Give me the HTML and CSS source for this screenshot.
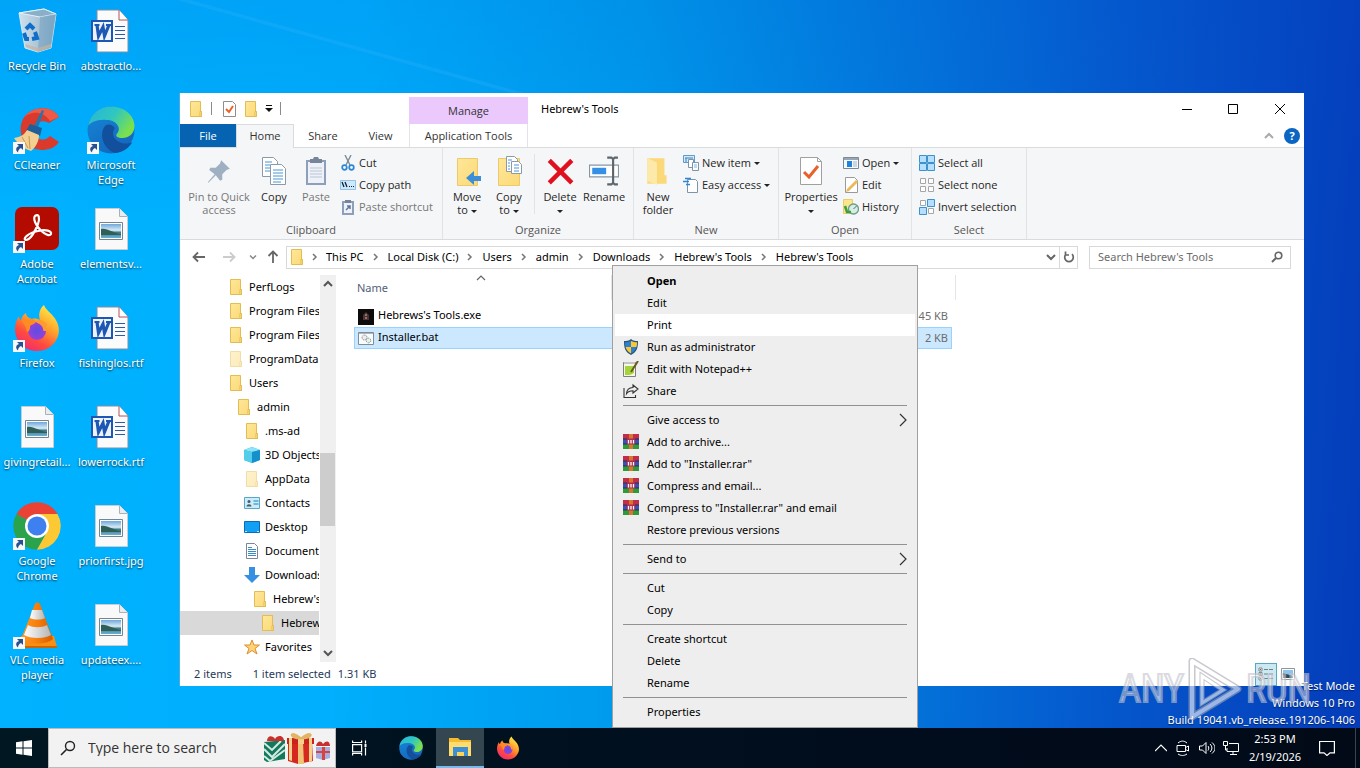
FILE: index.html
```html
<!DOCTYPE html>
<html lang="en">
<head>
<meta charset="utf-8">
<title>Desktop</title>
<link rel="stylesheet" href="styles.css">
</head>
<body>
<svg class="defs" aria-hidden="true">
  <defs>
    <linearGradient id="gFold" x1="0" y1="0" x2="1" y2="1"><stop offset="0" stop-color="#ffe79a"/><stop offset="1" stop-color="#fbd976"/></linearGradient>
    <linearGradient id="gEdgeTop" x1="0" y1="0" x2="1" y2=".5"><stop offset="0" stop-color="#28b4dc"/><stop offset=".55" stop-color="#2fc7c0"/><stop offset="1" stop-color="#7be04c"/></linearGradient>
    <linearGradient id="gEdgeMid" x1="0" y1="0" x2=".6" y2="1"><stop offset="0" stop-color="#1488d8"/><stop offset="1" stop-color="#1567bd"/></linearGradient>
    <linearGradient id="gFx" x1=".8" y1="0" x2=".2" y2="1"><stop offset="0" stop-color="#fff04a"/><stop offset=".4" stop-color="#ffa02b"/><stop offset=".7" stop-color="#ff4b3e"/><stop offset="1" stop-color="#f0257c"/></linearGradient>
    <radialGradient id="gFxIn"><stop offset="0" stop-color="#5a4fe0"/><stop offset="1" stop-color="#9a3fd8"/></radialGradient>
    <linearGradient id="gBin" x1="0" x2="1"><stop offset="0" stop-color="#cfe1ef"/><stop offset=".55" stop-color="#a9c3d6"/><stop offset="1" stop-color="#6e9cbd"/></linearGradient>
    <linearGradient id="gSky" x1="0" y1="0" x2="0" y2="1"><stop offset="0" stop-color="#6fa8dc"/><stop offset=".45" stop-color="#d8ebf5"/><stop offset=".6" stop-color="#3b7a8c"/><stop offset="1" stop-color="#6db0d4"/></linearGradient>
    <linearGradient id="gCone" x1="0" x2="1"><stop offset="0" stop-color="#ff9a2a"/><stop offset=".5" stop-color="#f77f0c"/><stop offset="1" stop-color="#d65c00"/></linearGradient>
    <linearGradient id="gConeW" x1="0" x2="1"><stop offset="0" stop-color="#fff"/><stop offset="1" stop-color="#b5b5b5"/></linearGradient>
  </defs>

  <symbol id="folder" viewBox="0 0 16 16"><path d="M2.500 .5h10v10h1v5h-11z" fill="url(#gFold)" stroke="#e3bd52"/><path d="M12 10.500h1.500v5H12z" fill="#ffe79a" stroke="#e3bd52"/></symbol>
  <symbol id="arrowlink" viewBox="0 0 12 12"><path d="M0 0h12v12H0z" fill="#f7f8fa"/><path d="M4 2h6v6L8 6c-2 1-3 2.500-3 4.500C2 8 3 5 6 4z" fill="#27528f"/></symbol>

  <symbol id="bin" viewBox="0 0 48 48"><path d="M6 6l25-4 12 5-5 34-13 4-13-4z" fill="url(#gBin)" stroke="#d7e8f2" stroke-width="1"/><path d="M6 6l21 4 16-3-12-5z" fill="#8ab0c9" stroke="#e6f1f7" stroke-width="1"/><path d="M27 10l-2 35 13-4 5-34z" fill="#7fa8c4" opacity=".7"/><path d="M12 37l13 4 13-4v3l-13 5-12-5z" fill="#c9b39d" opacity=".7"/><g fill="none" stroke="#0f6fc8" stroke-width="4"><path d="M13 22l4-4 4 4M11 26l2 6h3M19 32l5-1-2-6"/></g></symbol>
  <symbol id="word" viewBox="0 0 48 48"><path d="M10 3h22l9 10v32H10z" fill="#fbfbfc" stroke="#7d8fa8"/><path d="M32 3v10h9" fill="#fff" stroke="#b2525a"/><path d="M28 19.500h10M28 23.500h10M28 27.500h10M28 31.500h10" stroke="#2a5cab" stroke-width="1"/><path d="M5 14h20v20H5z" fill="#eef3fb" stroke="#1d57b4" stroke-width="2"/><path d="M10 18l1.500 11 4.500-9 1.500 9L22 18" fill="none" stroke="#1d57b4" stroke-width="3.200"/><path d="M7.500 18h5M19 18h5" stroke="#1d57b4" stroke-width="2"/></symbol>
  <symbol id="image" viewBox="0 0 48 48"><path d="M8.500 3.500h24l8 8v33h-32z" fill="#f9f9f9" stroke="#c9cdd2"/><path d="M32.500 3.500v8h8" fill="#e9ebee" stroke="#a9b0b8"/><path d="M12.500 17.500h23v17h-23z" fill="#fff" stroke="#6e8796"/><path d="M14 19h20v14H14z" fill="url(#gSky)"/><path d="M14 24c7-1 11 4 20 5v1H14z" fill="#2f5f57"/></symbol>
  <symbol id="ccleaner" viewBox="0 0 48 48"><path d="M46 11C39-2 17 0 10 13c-7 15 2 30 18 31 8 0 14-2 18-8l-9-6c-5 6-14 4-16-3-2-8 6-15 15-10z" fill="#d93a2b"/><path d="M46 11C39-2 17 0 10 13c5-7 19-10 27 2z" fill="#ee5a45"/><path d="M29 4l2 1-7 19-4-2z" fill="#2874ad"/><path d="M17 18l12 4-2 8-14-5z" fill="#1e5f99"/><path d="M14 24l12 5c0 7-4 13-8 16C11 43 5 38 1 32c7-1 10-3 13-8z" fill="#f3cf94"/><path d="M9 31l6 11M16 30l1 13" stroke="#c9984e" fill="none"/></symbol>
  <symbol id="edge" viewBox="0 0 48 48"><circle cx="24" cy="24" r="23.500" fill="url(#gEdgeMid)"/><path d="M19 19c-8 8-3 24 9 28C38 46 43 40 45.500 36 38 40 27 36 26 28c0-3 1-5 2-6-3-4-7-4-9-3z" fill="#124f9c"/><path d="M1 20C3 8 13 .5 24 .5 38 .5 47.500 10 47.500 20c0 8-6 12-12 12-5 0-8-2-5-5 4-5-1-13-11-13C10 13 3 17 1 20z" fill="url(#gEdgeTop)"/></symbol>
  <symbol id="acrobat" viewBox="0 0 48 48"><rect x="2" y="2" width="44" height="43" rx="7" fill="#b30b00"/><path d="M22 11c4-3 5 2 3 8-3 8-8 16-12 16-4-1 2-7 12-9 8-2 14 0 13 3-2 4-12-3-16-12-1-3-1-5 0-6z" fill="none" stroke="#fff" stroke-width="2.200"/></symbol>
  <symbol id="firefox" viewBox="0 0 48 48"><path d="M31 1c2 5 5 6 9 11 6 7 7 14 5 20-3 9-11 15-21 15C11 47 2 37 2 25c0-6 2-10 4-13 0 3 1 4 2 4 1-4 3-6 5-7 0 3 2 5 6 6 3-1 6 0 8 1-2-6 0-12 4-15z" fill="url(#gFx)"/><circle cx="24" cy="27" r="9" fill="url(#gFxIn)"/><path d="M8 16c4-1 7 0 11-1 3 0 4 4 2 5-3 1-4 1-4 4 0 2-2 4-3 4-1-5-3-9-6-12z" fill="#ff8c22"/><path d="M33 22c-3-5-7-5-9-5 5 2 8 6 8 10" fill="none" stroke="#ff9b2e" stroke-width="3"/></symbol>
  <symbol id="chrome" viewBox="0 0 48 48"><path d="M24 24L3.500 12A23.700 23.700 0 0 1 44.500 12z" fill="#ea4335"/><path d="M24 24L3.500 12A23.700 23.700 0 0 0 24 47.700L34 30z" fill="#2ba24c"/><path d="M34 30L24 47.700A23.700 23.700 0 0 0 44.500 12H24z" fill="#fcc934"/><circle cx="24" cy="24" r="12" fill="#fff"/><circle cx="24" cy="24" r="9.500" fill="#3f80f0"/></symbol>
  <symbol id="vlc" viewBox="0 0 48 48"><path d="M8 35h33l3 11H7z" fill="#f78f14"/><path d="M7 45h37v2H7z" fill="#d16400"/><path d="M22 3c1-2 4-2 5 0l13 35c-6 6-26 6-32 0z" fill="url(#gCone)"/><path d="M19 9h10l3 8c-4 2-11 2-15 0z" fill="url(#gConeW)"/><path d="M15 24c5 3 14 3 19 0l4 10c-6 4-21 4-27 0z" fill="url(#gConeW)"/></symbol>

  <symbol id="pin" viewBox="0 0 24 24"><path d="M14 2l8 8-3 1-4 4 0 5-2 1-4-5-7 7 0-1 6-7-5-4 1-2 5 0 4-4z" fill="#9fb0c2"/></symbol>
  <symbol id="copy" viewBox="0 0 26 30"><g fill="#fff" stroke="#8d99a6"><path d="M1.500 1.500h11l4 4v15h-15z"/><path d="M9.500 8.500h11l4 4v16h-15z"/></g><path d="M4 6h7M4 9h5M4 12h5M4 15h5M12 14h10M12 17h10M12 20h10M12 23h10M12 26h8" stroke="#4a96d6" fill="none"/></symbol>
  <symbol id="paste" viewBox="0 0 24 30"><path d="M2 4h20v25H2z" fill="#8d9fb9"/><path d="M4 6h16v21H4z" fill="#eef2f8"/><path d="M6 3h3l1-2h4l1 2h3v4H6z" fill="#76859b"/><path d="M6 12h12M6 15h12M6 18h12M6 21h12" stroke="#b9c5d6"/></symbol>
  <symbol id="cut" viewBox="0 0 16 16"><path d="M5 0l5 10M11 0L6 10" stroke="#7b8b98" stroke-width="1.400" fill="none"/><circle cx="4.500" cy="12.500" r="2.300" fill="none" stroke="#2b88d8" stroke-width="1.700"/><circle cx="11.500" cy="12.500" r="2.300" fill="none" stroke="#2b88d8" stroke-width="1.700"/></symbol>
  <symbol id="path" viewBox="0 0 16 16"><path d="M.5 3.500h15v9H.5z" fill="#cfe8fb" stroke="#8fc3ea"/><path d="M2 5l2 5M5 5l2 5" stroke="#123" stroke-width="1.300"/><path d="M9 9h1v1H9zM11 9h1v1h-1zM13 9h1v1h-1z" fill="#123"/></symbol>
  <symbol id="pshort" viewBox="0 0 16 16"><path d="M2 2h12v14H2z" fill="#8d9fb9"/><path d="M4 4h8v10H4z" fill="#eef2f8"/><path d="M5 1h6v3H5z" fill="#76859b"/><path d="M6 11l4-4M7 7h3v3" stroke="#5f77a0" stroke-width="1.500" fill="none"/></symbol>
  <symbol id="move" viewBox="0 0 28 30"><path d="M4.500 2.500h20v27h-20z" fill="url(#gFold)" stroke="#ecca69"/><path d="M28 20v5h-7v4l-8-7 8-7v5z" fill="#3b8fd9"/></symbol>
  <symbol id="copyto" viewBox="0 0 28 30"><path d="M3.500 2.500h21v27h-21z" fill="url(#gFold)" stroke="#ecca69"/><g fill="#fff" stroke="#8d99a6"><path d="M11.500 .5h8l3 3v12h-11z"/><path d="M16.500 5.500h7l3 3v9h-10z"/></g><path d="M19 9h5M19 12h5M19 15h5M13 4h4M13 7h2M13 10h2M13 13h2" stroke="#4a96d6"/></symbol>
  <symbol id="delete" viewBox="0 0 28 28"><path d="M4 4l21 21M25 4L4 25" stroke="#e0101f" stroke-width="4.200"/></symbol>
  <symbol id="rename" viewBox="0 0 28 28"><path d="M.5 8.500h27v11H.5z" fill="#fff" stroke="#8796a3"/><path d="M3 11h13v6H3z" fill="#3390e6"/><path d="M17 1.500h4l1.500 1.500L24 1.500h3M22.500 3v22M17 26.500h4l1.500-1.500 1.500 1.500h3" stroke="#5d656d" stroke-width="2" fill="none"/></symbol>
  <symbol id="newfolder" viewBox="0 0 28 28"><path d="M4 2h16v16h2v8H4z" fill="#fbd978"/><path d="M4 2l9 4v21l-9-4z" fill="#fdeaab"/></symbol>
  <symbol id="newitem" viewBox="0 0 16 16"><path d="M.5 .5h11v7H.5z" fill="#d5eafa" stroke="#5b9bd0"/><path d="M2 3h8M3 3v4" stroke="#3b83bd"/><g fill="#fff" stroke="#7d93a6"><path d="M5.500 4.500h5v8h-5z"/><path d="M9.500 7.500h6v8h-6z"/></g><path d="M11 10h3M11 12h3" stroke="#72b5e6"/></symbol>
  <symbol id="easy" viewBox="0 0 16 16"><path d="M4.500 2.500h8l2 2v11h-10z" fill="#fff" stroke="#7d93a6"/><path d="M2 1.500h6M0 4.500h6M3 7.500h4" stroke="#2b88d8" stroke-width="1.500"/></symbol>
  <symbol id="props" viewBox="0 0 24 30"><path d="M1.500 1.500h17l4 4v23h-21z" fill="#fff" stroke="#a0a0a0"/><path d="M18.500 1.500v4h4" fill="none" stroke="#a0a0a0"/><path d="M5 16l5 5 9-11" fill="none" stroke="#e8612c" stroke-width="3"/></symbol>
  <symbol id="open" viewBox="0 0 16 16"><path d="M.5 2.500h15v11H.5z" fill="#f7fafc" stroke="#7c8994"/><path d="M1 3h14v2H1z" fill="#9aa7b2"/><path d="M4 6h5v6H4z" fill="#1f83dc"/><path d="M10 7h4M10 9h4M10 11h4" stroke="#9db5c8"/></symbol>
  <symbol id="edit" viewBox="0 0 16 16"><path d="M2.500 .5h9l3 3v12h-12z" fill="#fff" stroke="#9a9a9a"/><path d="M15 5l-9 9-3 1 1-3 9-9z" fill="#edb75c"/></symbol>
  <symbol id="history" viewBox="0 0 16 16"><path d="M.5 .5h9v14h-9z" fill="#fbe58f" stroke="#e7cf65"/><circle cx="10.500" cy="10" r="5" fill="#d5efe2" stroke="#6f9a8a" stroke-width="1.300"/><path d="M10.500 10l3-3" stroke="#4c6f8a" fill="none"/><path d="M2 7l2 6h4" stroke="#36a047" stroke-width="2.500" fill="none"/></symbol>
  <symbol id="selall" viewBox="0 0 16 16"><path d="M.5 .5h7v7h-7zM8.500 .5h7v7h-7zM.5 8.500h7v7h-7zM8.500 8.500h7v7h-7z" fill="#b5dffc" stroke="#3e92cc"/></symbol>
  <symbol id="selnone" viewBox="0 0 16 16"><path d="M1.500 1.500h5v5h-5zM9.500 1.500h5v5h-5zM1.500 9.500h5v5h-5zM9.500 9.500h5v5h-5z" fill="#fff" stroke="#a6a6a6"/></symbol>
  <symbol id="selinv" viewBox="0 0 16 16"><path d="M1.500 1.500h5v5h-5zM9.500 9.500h5v5h-5z" fill="#fff" stroke="#a6a6a6"/><path d="M8.500 .5h7v7h-7zM.5 8.500h7v7h-7z" fill="#b5dffc" stroke="#3e92cc"/></symbol>
  <symbol id="qprops" viewBox="0 0 16 16"><path d="M2.500 .5h9l3 3v12h-12z" fill="#fff" stroke="#8e8e8e"/><path d="M5 8l3 3 4-6" fill="none" stroke="#e8612c" stroke-width="2"/></symbol>

  <symbol id="objects" viewBox="0 0 16 16"><path d="M0 3l8-3 8 3v10l-8 3-8-3z" fill="#22b1dc"/><path d="M0 3l8-3 8 3-8 2z" fill="#8ee4f5"/><path d="M0 3l8 2v11l-8-3z" fill="#52cdea"/><path d="M8 5l8-2v10l-8 3z" fill="#1590cc"/></symbol>
  <symbol id="contacts" viewBox="0 0 16 16"><path d="M.5 2.500h15v11H.5z" fill="#c9edfb" stroke="#5aa7c8"/><circle cx="5" cy="6.500" r="1.500" fill="#4f5a63"/><path d="M2.500 11.500c0-3 5-3 5 0z" fill="#4f5a63"/><path d="M9.500 6h5M9.500 9h5" stroke="#1e7fb8"/></symbol>
  <symbol id="desk" viewBox="0 0 16 16"><path d="M.5 2.500h15v11H.5z" fill="#12a0f5" stroke="#0b6cb5"/><path d="M1 12.500h2M13 12.500h2" stroke="#bfe5ff"/></symbol>
  <symbol id="docs" viewBox="0 0 16 16"><path d="M2.500 .5h8l3 3v12h-11z" fill="#fff" stroke="#798894"/><path d="M4 4h4v1H4zM4 6h8v1H4zM4 8h8v1H4zM4 10h8v1H4zM4 12h8v1H4z" fill="#3b8bc6"/></symbol>
  <symbol id="down" viewBox="0 0 16 16"><path d="M5 0h6v8h5l-8 8-8-8h5z" fill="#358fe2"/></symbol>
  <symbol id="star" viewBox="0 0 16 16"><path d="M8 1l2 5h5.500l-4.500 3.500L13 15l-5-3.500L3 15l2-5.500L.5 6H6z" fill="#ffd277" stroke="#d9902e"/></symbol>
  <symbol id="exe" viewBox="0 0 16 16"><path d="M0 0h16v16H0z" fill="#0d0b0c"/><path d="M5 11V6l3-3 3 3v5z" fill="#4a3432"/><path d="M7 5h2v2H7zM7 8h2v2H7z" fill="#9c6b68"/></symbol>
  <symbol id="bat" viewBox="0 0 16 16"><path d="M.5 1.500h15v12H.5z" fill="#fafcfd" stroke="#7e8d99"/><path d="M1 2.500h14" stroke="#aab6bf"/><circle cx="6.500" cy="6.500" r="2.500" fill="#eee" stroke="#8f8f8f" stroke-dasharray="1.500 .7"/><circle cx="10.500" cy="9.500" r="2.300" fill="#e4f1ee" stroke="#7f9a9a" stroke-dasharray="1.500 .7"/></symbol>

  <symbol id="shield" viewBox="0 0 16 16"><path d="M8 0c2 2 5 2 7 2 0 7-1 11-7 14C2 13 1 9 1 2c2 0 5 0 7-2z" fill="#29557c"/><path d="M8 2v6H2.500C2 6 2 5 2 3.200 4 3.200 6 3 8 2zM8 8h5.500c-1 3-2.500 5-5.500 6.600z" fill="#2d7fd0"/><path d="M8 2c2 1 4 1.200 6 1.200 0 1.800 0 2.800-.5 4.800H8zM8 8v6.600C5 13 3.500 11 2.500 8z" fill="#fbc834"/></symbol>
  <symbol id="npp" viewBox="0 0 16 16"><path d="M.5 1.500h12v14H.5z" fill="#f5f8e8" stroke="#7e7e7e"/><path d="M2 5h9v7l-4 2H2z" fill="#a4d33a"/><path d="M1 1h11v2H1z" fill="#c4c4c4"/><path d="M15 0L8 11" stroke="#6a5b20" stroke-width="2"/></symbol>
  <symbol id="share" viewBox="0 0 16 16"><path d="M1 5v9.500h11.500V12M10 2l5 4-5 4V7.700c-3 0-5 .8-6.500 3 .3-4 3-6 6.500-6.200z" fill="none" stroke="#333" stroke-width="1.100"/></symbol>
  <symbol id="rar" viewBox="0 0 16 16"><path d="M0 0h16v5H0z" fill="#c02f4a"/><path d="M0 5h16v5H0z" fill="#3a50b8"/><path d="M0 10h16v5H0z" fill="#2e9a3a"/><path d="M6 0h4v15H6z" fill="#d9762e"/><path d="M4 4.500h8v6H4z" fill="#b32a4a"/><path d="M5.500 6v3.500M8 6v3.500M10.500 6v3.500" stroke="#fff" stroke-width="1.300"/><path d="M0 5h4M12 5h4M0 10h4M12 10h4" stroke="#2a2040" stroke-width=".8"/></symbol>
  <symbol id="chevr" viewBox="0 0 8 14"><path d="M1 1l6 6-6 6" fill="none" stroke="#333" stroke-width="1.200"/></symbol>
  <symbol id="crumb" viewBox="0 0 6 8"><path d="M1 1l3 3-3 3" fill="none" stroke="#777" stroke-width="1.500"/></symbol>
  <symbol id="cdown" viewBox="0 0 10 8"><path d="M1 2l4 4 4-4" fill="none" stroke="currentColor" stroke-width="2"/></symbol>
  <symbol id="cup" viewBox="0 0 10 8"><path d="M1 6l4-4 4 4" fill="none" stroke="currentColor" stroke-width="2"/></symbol>
  <symbol id="cupthin" viewBox="0 0 10 6"><path d="M1 5l4-4 4 4" fill="none" stroke="currentColor" stroke-width="1.200"/></symbol>
  <symbol id="aleft" viewBox="0 0 14 12"><path d="M13 6H2M6 1.500L1.500 6 6 10.500" fill="none" stroke="currentColor" stroke-width="1.800"/></symbol>
  <symbol id="lens" viewBox="0 0 16 16"><circle cx="10" cy="6" r="4.500" fill="none" stroke="currentColor" stroke-width="1.400"/><path d="M6.500 9.500L1 15" stroke="currentColor" stroke-width="1.600"/></symbol>
  <symbol id="lensbold" viewBox="0 0 12 12"><circle cx="7.500" cy="4.500" r="3.300" fill="none" stroke="currentColor" stroke-width="1.600"/><path d="M5 7L1 11" stroke="currentColor" stroke-width="2"/></symbol>
</svg>

<main class="desktop">
  <nav class="shortcuts" aria-label="Desktop">
    <a href="#bin"><svg><use href="#bin"/></svg><span>Recycle Bin</span></a>
    <a href="#ccleaner"><i><svg><use href="#ccleaner"/></svg><svg class="link"><use href="#arrowlink"/></svg></i><span>CCleaner</span></a>
    <a href="#acrobat"><i><svg><use href="#acrobat"/></svg><svg class="link"><use href="#arrowlink"/></svg></i><span>Adobe Acrobat</span></a>
    <a href="#firefox"><i><svg><use href="#firefox"/></svg><svg class="link"><use href="#arrowlink"/></svg></i><span>Firefox</span></a>
    <a href="#giving"><svg><use href="#image"/></svg><span>givingretail...</span></a>
    <a href="#chrome"><i><svg><use href="#chrome"/></svg><svg class="link"><use href="#arrowlink"/></svg></i><span>Google Chrome</span></a>
    <a href="#vlc"><i><svg><use href="#vlc"/></svg><svg class="link"><use href="#arrowlink"/></svg></i><span>VLC media player</span></a>
    <a href="#abstract"><svg><use href="#word"/></svg><span>abstractlo...</span></a>
    <a href="#edge"><i><svg><use href="#edge"/></svg><svg class="link"><use href="#arrowlink"/></svg></i><span>Microsoft Edge</span></a>
    <a href="#elements"><svg><use href="#image"/></svg><span>elementsv...</span></a>
    <a href="#fishing"><svg><use href="#word"/></svg><span>fishinglos.rtf</span></a>
    <a href="#lower"><svg><use href="#word"/></svg><span>lowerrock.rtf</span></a>
    <a href="#prior"><svg><use href="#image"/></svg><span>priorfirst.jpg</span></a>
    <a href="#update"><svg><use href="#image"/></svg><span>updateex....</span></a>
  </nav>

  <section class="window" aria-label="Hebrew's Tools">
    <header class="titlebar">
      <div class="quick">
        <svg class="i16"><use href="#folder"/></svg><hr>
        <button aria-label="Properties"><svg class="i16"><use href="#qprops"/></svg></button>
        <button aria-label="New folder"><svg class="i16"><use href="#folder"/></svg></button>
        <button aria-label="Customize"><svg class="qmore" viewBox="0 0 8 8"><path d="M1 .5h6" stroke="#111"/><path d="M0 3h8L4 7z" fill="#111"/></svg></button><hr>
      </div>
      <div class="manage">Manage</div>
      <h1>Hebrew's Tools</h1>
      <div class="winctl">
        <button aria-label="Minimize"><svg viewBox="0 0 10 10"><path d="M0 5.500h10" stroke="#000"/></svg></button>
        <button aria-label="Maximize"><svg viewBox="0 0 10 10"><path d="M.5 .5h9v9h-9z" stroke="#000" fill="none"/></svg></button>
        <button aria-label="Close"><svg viewBox="0 0 10 10"><path d="M0 0l10 10M10 0L0 10" stroke="#000"/></svg></button>
      </div>
    </header>
    <div class="tabs">
      <button class="file">File</button><button class="home">Home</button><button>Share</button><button class="view">View</button><button class="apptools">Application Tools</button>
      <div class="tabend"><svg class="collapse"><use href="#cup"/></svg><button class="help" aria-label="Help">?</button></div>
    </div>
    <div class="ribbon">
      <div class="group g-clip">
        <div class="tools">
          <button class="big dim w68"><svg class="i26"><use href="#pin"/></svg><span>Pin to Quick access</span></button>
          <button class="big w42"><svg class="i30"><use href="#copy"/></svg><span>Copy</span></button>
          <button class="big dim w42"><svg class="i30"><use href="#paste"/></svg><span>Paste</span></button>
          <div class="stack">
            <button><svg class="i16"><use href="#cut"/></svg>Cut</button>
            <button><svg class="i16"><use href="#path"/></svg>Copy path</button>
            <button class="dim"><svg class="i16"><use href="#pshort"/></svg>Paste shortcut</button>
          </div>
        </div>
        <h2>Clipboard</h2>
      </div>
      <div class="group g-org">
        <div class="tools">
          <button class="big w42"><svg class="i30"><use href="#move"/></svg><span>Move<br>to <b></b></span></button>
          <button class="big w42"><svg class="i30"><use href="#copyto"/></svg><span>Copy<br>to <b></b></span></button>
          <hr>
          <button class="big w42"><svg class="i30"><use href="#delete"/></svg><span>Delete<br><b></b></span></button>
          <button class="big w46"><svg class="i30"><use href="#rename"/></svg><span>Rename</span></button>
        </div>
        <h2>Organize</h2>
      </div>
      <div class="group g-new">
        <div class="tools">
          <button class="big w42"><svg class="i30"><use href="#newfolder"/></svg><span>New folder</span></button>
          <div class="stack">
            <button><svg class="i16"><use href="#newitem"/></svg>New item<b></b></button>
            <button><svg class="i16"><use href="#easy"/></svg>Easy access<b></b></button>
          </div>
        </div>
        <h2>New</h2>
      </div>
      <div class="group g-open">
        <div class="tools">
          <button class="big w56"><svg class="i30"><use href="#props"/></svg><span>Properties<br><b></b></span></button>
          <div class="stack">
            <button><svg class="i16"><use href="#open"/></svg>Open<b></b></button>
            <button><svg class="i16"><use href="#edit"/></svg>Edit</button>
            <button><svg class="i16"><use href="#history"/></svg>History</button>
          </div>
        </div>
        <h2>Open</h2>
      </div>
      <div class="group g-sel">
        <div class="tools">
          <div class="stack">
            <button><svg class="i16"><use href="#selall"/></svg>Select all</button>
            <button><svg class="i16"><use href="#selnone"/></svg>Select none</button>
            <button><svg class="i16"><use href="#selinv"/></svg>Invert selection</button>
          </div>
        </div>
        <h2>Select</h2>
      </div>
    </div>

    <div class="address">
      <div class="history">
        <button aria-label="Back"><svg class="i14"><use href="#aleft"/></svg></button>
        <button aria-label="Forward" class="off"><svg class="i14 flip"><use href="#aleft"/></svg></button>
        <button aria-label="Recent" class="recent"><svg><use href="#cdown"/></svg></button>
        <button aria-label="Up" class="up"><svg class="i14 turn"><use href="#aleft"/></svg></button>
      </div>
      <div class="crumbs">
        <svg class="i16"><use href="#folder"/></svg>
        <svg class="sep"><use href="#crumb"/></svg><a href="#pc">This PC</a>
        <svg class="sep"><use href="#crumb"/></svg><a href="#c">Local Disk (C:)</a>
        <svg class="sep"><use href="#crumb"/></svg><a href="#users">Users</a>
        <svg class="sep"><use href="#crumb"/></svg><a href="#admin">admin</a>
        <svg class="sep"><use href="#crumb"/></svg><a href="#dl">Downloads</a>
        <svg class="sep"><use href="#crumb"/></svg><a href="#ht">Hebrew's Tools</a>
        <svg class="sep"><use href="#crumb"/></svg><a href="#ht2">Hebrew's Tools</a>
        <button class="drop" aria-label="Previous locations"><svg><use href="#cdown"/></svg></button>
        <button class="refresh" aria-label="Refresh"><svg viewBox="0 0 12 12"><path d="M3 3.200A4.300 4.300 0 1 0 9 3.200M2.500 .5v3.500h3.500" fill="none" stroke="#666" stroke-width="1.700"/></svg></button>
      </div>
      <label class="search"><input type="text" placeholder="Search Hebrew's Tools" aria-label="Search Hebrew's Tools"><svg><use href="#lensbold"/></svg></label>
    </div>

    <div class="body">
      <nav class="tree" aria-label="Folders">
        <ul>
          <li><svg><use href="#folder"/></svg>PerfLogs</li>
          <li><svg><use href="#folder"/></svg>Program Files</li>
          <li><svg><use href="#folder"/></svg>Program Files (x86)</li>
          <li class="hid"><svg><use href="#folder"/></svg>ProgramData</li>
          <li><svg><use href="#folder"/></svg>Users</li>
          <li class="l1"><svg><use href="#folder"/></svg>admin</li>
          <li class="l2"><svg><use href="#folder"/></svg>.ms-ad</li>
          <li class="l2"><svg><use href="#objects"/></svg>3D Objects</li>
          <li class="l2 hid"><svg><use href="#folder"/></svg>AppData</li>
          <li class="l2"><svg><use href="#contacts"/></svg>Contacts</li>
          <li class="l2"><svg><use href="#desk"/></svg>Desktop</li>
          <li class="l2"><svg><use href="#docs"/></svg>Documents</li>
          <li class="l2"><svg><use href="#down"/></svg>Downloads</li>
          <li class="l3"><svg><use href="#folder"/></svg>Hebrew's Tools</li>
          <li class="l4 on"><svg><use href="#folder"/></svg>Hebrew's Tools</li>
          <li class="l2"><svg><use href="#star"/></svg>Favorites</li>
        </ul>
        <div class="scroll"><svg><use href="#cup"/></svg><div class="thumb"></div><svg><use href="#cdown"/></svg></div>
      </nav>
      <div class="files">
        <svg class="sort"><use href="#cupthin"/></svg>
        <table>
          <thead><tr><th class="c-name">Name</th><th></th><th></th><th></th><th class="c-pad"></th></tr></thead>
          <tbody>
            <tr><td><svg><use href="#exe"/></svg>Hebrews's Tools.exe</td><td></td><td></td><td class="num">45 KB</td><td class="c-pad"></td></tr>
            <tr class="on"><td><svg><use href="#bat"/></svg>Installer.bat</td><td></td><td></td><td class="num">2 KB</td><td class="c-pad"></td></tr>
          </tbody>
        </table>
      </div>
    </div>
    <footer class="status">
      <span>2 items</span><span class="chosen">1 item selected</span><span>1.31 KB</span>
      <div class="views">
        <button class="on" aria-label="Details"><svg viewBox="0 0 16 14"><path d="M1 1h3v3H1zM1 5.500h3v3H1zM1 10h3v3H1z" fill="#fff" stroke="#7b8c94"/><path d="M2 2h1v1H2zM2 6.500h1v1H2zM2 11h1v1H2z" fill="#d33"/><path d="M6 2.500h10M6 7h10M6 11.500h10" stroke="#68808c" stroke-dasharray="4 1"/></svg></button>
        <button aria-label="Large icons"><svg viewBox="0 0 14 12"><path d="M.5 .5h13v11H.5z" fill="#fff" stroke="#8a979e"/><path d="M2 2h10v8H2z" fill="#8fc3ea"/><path d="M2 5l10 3v2H2z" fill="#2b4a58"/></svg></button>
      </div>
    </footer>
  </section>

  <p class="build">Test Mode<br>Windows 10 Pro<br>Build 19041.vb_release.191206-1406</p>
  <div class="brand" aria-label="ANY RUN"><span>ANY</span><svg viewBox="0 0 54 62"><path d="M4 3L50 31 4 59z" fill="none" stroke="#a5a5b0" stroke-width="7" stroke-linejoin="round"/><path d="M4 3L50 31 4 59z" fill="none" stroke="#fff" stroke-width="4" stroke-linejoin="round"/><path d="M14 18v27l21-13z" fill="none" stroke="#a5a5b0" stroke-width="5"/><path d="M14 18v27l21-13z" fill="none" stroke="#fff" stroke-width="3"/></svg><span>RUN</span></div>

  <div class="menu" role="menu">
    <button role="menuitem" class="def">Open</button>
    <button role="menuitem">Edit</button>
    <button role="menuitem" class="hot">Print</button>
    <button role="menuitem"><svg><use href="#shield"/></svg>Run as administrator</button>
    <button role="menuitem"><svg><use href="#npp"/></svg>Edit with Notepad++</button>
    <button role="menuitem"><svg><use href="#share"/></svg>Share</button>
    <hr>
    <button role="menuitem">Give access to<svg class="more"><use href="#chevr"/></svg></button>
    <button role="menuitem"><svg><use href="#rar"/></svg>Add to archive...</button>
    <button role="menuitem"><svg><use href="#rar"/></svg>Add to "Installer.rar"</button>
    <button role="menuitem"><svg><use href="#rar"/></svg>Compress and email...</button>
    <button role="menuitem"><svg><use href="#rar"/></svg>Compress to "Installer.rar" and email</button>
    <button role="menuitem">Restore previous versions</button>
    <hr>
    <button role="menuitem">Send to<svg class="more"><use href="#chevr"/></svg></button>
    <hr>
    <button role="menuitem">Cut</button>
    <button role="menuitem">Copy</button>
    <hr>
    <button role="menuitem">Create shortcut</button>
    <button role="menuitem">Delete</button>
    <button role="menuitem">Rename</button>
    <hr>
    <button role="menuitem">Properties</button>
  </div>
</main>

<footer class="taskbar">
  <button class="tb" aria-label="Start"><svg class="i16" viewBox="0 0 16 16"><path d="M0 2.300l6.500-1v6.200H0zM7.500 1.200L16 0v7.500H7.500zM0 8.500h6.500v6.200l-6.500-1zM7.500 8.500H16V16l-8.500-1.200z" fill="#fff"/></svg></button>
  <label class="find"><svg class="i16"><use href="#lens"/></svg><input type="text" placeholder="Type here to search" aria-label="Type here to search">
    <svg class="gifts" viewBox="0 0 68 32"><path d="M0 10l21-2v19L3 30 0 28z" fill="#15785d"/><path d="M0 17l8 8 13-13M0 24l6 5 15-11M0 11l8 7 9-9" fill="none" stroke="#d3ece2" stroke-width="2"/><path d="M3 9c0-6 6-6 8-2 3-5 9-3 9 2z" fill="#c92f2b"/><path d="M24 10h24l1 19-15 3-10-3z" fill="#d5281f"/><path d="M34 10h5l1 22h-6z" fill="#efc479"/><path d="M23 6h27v6H23z" fill="#c8231d"/><path d="M34 6h6v6h-6zM25 6h3v23l-3-1zM45 6h3v23l-3 1z" fill="#f4d08c"/><path d="M36 6c-9-7-11-2-3 0zM38 6c9-7 12-2 3 0z" fill="none" stroke="#e2b566" stroke-width="2.500"/><path d="M52 15h14v11l-7 2-7-2z" fill="#a4aee0"/><path d="M58 15h3v13h-3zM52 19h14v2H52z" fill="#d8423f"/><path d="M52 14c1-5 5-6 7-2 4-5 7-2 7 2z" fill="#c92f2b"/></svg></label>
  <button class="tb" aria-label="Task View"><svg class="i16" viewBox="0 0 16 16"><g fill="none" stroke="#fff" stroke-width="1.200"><path d="M.6 4.600h9v7.200h-9zM.6 .5v2h9v-2M.6 15.500v-2h9v2M13.500 .5v3M13.500 7.500v8"/></g><path d="M12.500 4h2v3h-2z" fill="#fff"/></svg></button>
  <button class="tb gap" aria-label="Microsoft Edge"><svg class="i24"><use href="#edge"/></svg></button>
  <button class="tb active" aria-label="File Explorer"><svg class="i24" viewBox="0 0 24 24"><path d="M1 3h9l2 2h11v16H1z" fill="#f8bb2d"/><path d="M1 7h22v14H1z" fill="#ffdc6b"/><path d="M5 12h15v9h-4v-4H9v4H5z" fill="#3c8fd5"/><path d="M9 17h7v4H9z" fill="#fbd35b"/></svg></button>
  <button class="tb" aria-label="Firefox"><svg class="i24"><use href="#firefox"/></svg></button>
  <div class="tray">
    <svg class="i12" viewBox="0 0 12 12"><path d="M0 9l6-6 6 6" fill="none" stroke="#fff" stroke-width="1.200"/></svg>
    <svg viewBox="0 0 16 16"><g fill="none" stroke="#fff"><path d="M2 5.500h8.500v6H2zM10.500 7.500l3-1.500v5l-3-1.500M3 3c3-2.500 6-2.500 9 0M3 14c3 2 6 2 9 0"/></g></svg>
    <svg viewBox="0 0 16 16"><path d="M.5 6h3L7 2.500v11L3.500 10h-3zM9 6c1 1 1 3 0 4.500M11 4c2.500 2.500 2.500 5.500 0 8M13 2.500c4 3.500 4 7.500 0 11" fill="none" stroke="#fff"/></svg>
    <svg viewBox="0 0 16 16"><path d="M6 3.500h9.500v8H4V8M7 14.500h7M10 11.500v3M.5 1.500h4v4h-4zM2.500 5.500V10H4" fill="none" stroke="#fff"/></svg>
    <time>2:53 PM<br>2/19/2026</time>
    <button aria-label="Notifications"><svg viewBox="0 0 16 16"><path d="M.6 1.500h14.800v11.300H11L8 15.500l-3-2.700H.6z" fill="none" stroke="#fff" stroke-width="1.200"/></svg></button>
  </div>
</footer>
</body>
</html>
```
FILE: styles.css
```css
* { box-sizing: border-box; }
body {
  margin: 0;
  height: 100vh;
  display: flex;
  flex-direction: column;
  overflow: hidden;
  font: 11px/16px "Noto Sans", "Open Sans", sans-serif;
  color: #000;
}
button, input { font: inherit; color: inherit; background: none; border: 0; padding: 0; margin: 0; }
button { display: flex; align-items: center; }
svg { display: block; flex: none; }
h1, h2, p, ul { margin: 0; padding: 0; font: inherit; list-style: none; }
a { color: inherit; text-decoration: none; }
.defs { position: absolute; width: 0; height: 0; }
.i14 { width: 14px; height: 12px; }
.i16 { width: 16px; height: 16px; }
.i24 { width: 24px; height: 24px; }
.i26 { width: 26px; height: 30px; }
.i30 { width: 30px; height: 30px; }

/* desktop */
.desktop {
  position: relative;
  flex: 1;
  min-height: 0;
  background:
    linear-gradient(180deg, rgba(0, 70, 200, .12) 0, transparent 30%),
    linear-gradient(93deg, #00b2ff 0%, #00affd 26%, #009bed 46%, #0374da 67%, #0557cc 82%, #043cba 100%);
}
.desktop::before {
  content: "";
  position: absolute;
  inset: 0;
  background: rgba(60, 180, 255, .22);
  clip-path: polygon(13% 0, 14% 0, 39% 13%, 38% 13%);
}
.shortcuts {
  position: relative;
  display: grid;
  grid-template-rows: repeat(7, 99px);
  grid-auto-columns: 74px;
  grid-auto-flow: column;
  justify-content: start;
  padding-top: 7px;
}
.shortcuts a { display: flex; flex-direction: column; align-items: center; gap: 3px; color: #fff; line-height: 15px; text-align: center; text-shadow: 0 1px 2px rgba(0, 0, 0, .75); }
.shortcuts span { max-width: 72px; }
.shortcuts svg { width: 48px; height: 48px; }
.shortcuts i { position: relative; }
.shortcuts svg.link { position: absolute; left: 0; bottom: 0; width: 12px; height: 12px; }

/* explorer window */
.window {
  position: absolute;
  inset: 93px 56px 42px 179px;
  display: flex;
  flex-direction: column;
  background: #fff;
  border-left: 1px solid #4aa9e6;
}
.titlebar { display: flex; height: 31px; }
.quick { width: 229px; display: flex; align-items: center; gap: 6px; padding-left: 8px; }
.quick hr { width: 1px; height: 13px; border: 0; margin: 0 3px 0 1px; background: #8b8b8b; }
.qmore { width: 8px; height: 8px; }
.manage { width: 119px; margin-top: 4px; background: #ebc9fd; text-align: center; line-height: 28px; color: #333; }
.titlebar h1 { padding-left: 13px; line-height: 31px; }
.winctl { margin-left: auto; display: flex; }
.winctl button { width: 46px; justify-content: center; }
.winctl svg { width: 10px; height: 10px; }
.winctl button:last-child { width: 48px; }
.tabs, .ribbon, .manage { font-family: "Open Sans", "Noto Sans", sans-serif; }
.tabs { display: flex; height: 24px; border-bottom: 1px solid #dadbdc; color: #333; }
.tabs > button { width: 58px; justify-content: center; }
.tabs .file { width: 56px; background: #0563b1; color: #fff; }
.tabs .home { height: 24px; background: #f5f6f7; border: solid #dadbdc; border-width: 1px 1px 0; padding-bottom: 2px; }
.tabs .view { width: 57px; }
.tabs .apptools { width: 119px; border: solid #e6e2e9; border-width: 0 1px; }
.tabend { margin-left: auto; display: flex; align-items: center; gap: 10px; padding-right: 4px; }
.collapse { width: 10px; height: 8px; color: #aaa; }
.help { width: 16px; height: 16px; border-radius: 50%; background: #0a66c2; color: #fff; justify-content: center; font-weight: 700; }

.ribbon { display: flex; height: 92px; background: #f5f6f7; border-bottom: 1px solid #dadbdc; color: #262626; }
.group { display: flex; flex-direction: column; justify-content: space-between; border-right: 1px solid #e2e3e4; padding: 4px 0 1px; }
.group h2 { text-align: center; color: #555; }
.tools { display: flex; }
.tools hr { width: 1px; height: 60px; border: 0; margin: 2px 4px; background: #e2e3e4; }
.big { flex-direction: column; gap: 4px; line-height: 13px; padding-top: 4px; }
.big span { text-align: center; }
.w42 { width: 42px; }
.w46 { width: 46px; }
.w56 { width: 56px; }
.w68 { width: 68px; }
.dim { color: #777; }
.stack button { height: 22px; gap: 3px; white-space: nowrap; }
.tools b { display: inline-block; border: 3px solid transparent; border-top-color: #222; border-bottom: 0; vertical-align: middle; }
.g-clip { width: 263px; }
.g-clip .tools { padding-left: 5px; }
.g-clip .stack { padding-left: 3px; }
.g-org { width: 191px; }
.g-org .tools { padding-left: 3px; }
.g-new { width: 145px; }
.g-new .tools { padding-left: 3px; }
.g-new .stack { padding-left: 4px; }
.g-open { width: 133px; }
.g-open .tools { padding-left: 4px; }
.g-open .stack { padding-left: 4px; }
.g-sel { width: 115px; }
.g-sel .tools { padding-left: 7px; }

.address { display: flex; align-items: center; height: 34px; padding-right: 13px; }
.history { width: 106px; display: flex; align-items: center; gap: 16px; padding-left: 12px; color: #666; }
.history .off { color: #ccc; }
.flip { transform: rotate(180deg); }
.turn { transform: rotate(90deg); }
.recent svg { width: 8px; height: 6px; }
.history .recent { width: 8px; margin-left: -3px; color: #888; }
.history .up { width: 14px; margin-left: -7px; }
.crumbs { flex: 1; display: flex; align-items: center; height: 23px; border: 1px solid #d9d9d9; padding-left: 2px; white-space: nowrap; }
.crumbs .sep { width: 6px; height: 8px; margin: 0 9px; }
.crumbs .i16 + .sep { margin: 0 8px 0 7px; }
.drop { margin-left: auto; width: 16px; height: 21px; justify-content: center; color: #666; }
.drop svg { width: 10px; height: 8px; }
.refresh { width: 18px; height: 21px; border-left: 1px solid #d9d9d9; justify-content: center; }
.refresh svg { width: 12px; height: 12px; }
.search { display: flex; align-items: center; width: 202px; height: 23px; margin-left: 11px; border: 1px solid #d9d9d9; padding: 0 7px 0 8px; color: #666; }
.search input { flex: 1; min-width: 0; outline: 0; }
.search svg { width: 12px; height: 12px; }
input::placeholder { color: #6b6b6b; opacity: 1; }

.body { flex: 1; display: flex; min-height: 0; padding-top: 1px; }
.tree { width: 156px; display: flex; overflow: hidden; }
.tree ul { width: 140px; overflow: hidden; padding-right: 1px; }
.tree li { display: flex; align-items: center; gap: 5px; height: 24px; padding-left: 48px; white-space: nowrap; overflow: hidden; }
.tree li svg { width: 16px; height: 16px; }
.tree .l1 { padding-left: 56px; }
.tree .l2 { padding-left: 64px; }
.tree .l3 { padding-left: 72px; }
.tree .l4 { padding-left: 80px; }
.tree .hid svg { opacity: .5; }
.tree .on { background: #d9d9d9; }
.scroll { width: 16px; background: #f0f0f0; display: flex; flex-direction: column; align-items: center; color: #555; padding: 5px 0; }
.scroll svg { width: 10px; height: 8px; }
.thumb { width: 100%; height: 73px; margin: 165px 0 auto; background: #cdcdcd; border-right: 1px solid #f0f0f0; }
.files { flex: 1; position: relative; padding-left: 18px; }
.sort { position: absolute; left: 140px; top: 0; width: 10px; height: 6px; color: #666; }
.files table { width: 602px; border-collapse: separate; border-spacing: 0; table-layout: fixed; }
.files th { height: 30px; padding: 0 3px 5px; text-align: left; font-weight: 400; color: #53607a; background: linear-gradient(#e5e5e5, #e5e5e5) right top / 1px 25px no-repeat; }
.files th:nth-child(4) { background: none; }
.files .c-name { width: 258px; }
.files .c-pad { width: 4px; padding: 0; }
.files td { height: 22px; padding: 0 4px; border: solid transparent; border-width: 1px 0; white-space: nowrap; }
.files td svg { display: inline-block; vertical-align: middle; width: 16px; height: 16px; margin-right: 4px; }
.files .num { text-align: right; color: #6d6d6d; }
.files .on td:not(.c-pad) { background: #cce8ff; border-color: #99d1ff; }
.files .on td:first-child { border-left: 1px solid #99d1ff; padding-left: 3px; }
.files .on .num { border-right: 1px solid #99d1ff; padding-right: 3px; }
.status { display: flex; align-items: center; height: 24px; padding: 0 5px 0 14px; color: #1e395b; }
.chosen { margin: 0 7px 0 21px; }
.views { margin-left: auto; display: flex; align-items: center; }
.views button { width: 22px; height: 23px; justify-content: center; }
.views .on { background: #cce8f0; border: 1px solid #5ba6c4; }
.views svg { width: 14px; height: 12px; }
.views .on svg { width: 16px; height: 14px; }

/* context menu */
.menu {
  position: absolute;
  left: 612px;
  top: 265px;
  width: 306px;
  padding: 4px 2px;
  background: #eee;
  border: 1px solid #a0a0a0;
}
.menu button { position: relative; width: 100%; height: 22px; padding-left: 32px; }
.menu hr { height: 1px; border: 0; margin: 3px 8px; background: #919191; }
.menu svg { position: absolute; left: 8px; width: 16px; height: 16px; }
.menu svg.more { left: auto; right: 8px; width: 8px; height: 14px; }
.menu .def { font-weight: 700; }
.menu .hot { background: #fff; }

.build { position: absolute; right: 5px; bottom: 0; color: #fff; line-height: 17px; text-align: right; text-shadow: 0 1px 1px rgba(0, 0, 0, .5); }
.brand { position: absolute; right: 49px; bottom: 8px; display: flex; align-items: center; gap: 4px; opacity: .6; font: 38px/60px "Roboto Condensed", Roboto, sans-serif; color: #fff; -webkit-text-stroke: 2px #c2c2cc; }
.brand svg { width: 54px; height: 62px; }

/* taskbar */
.taskbar { display: flex; height: 40px; background: linear-gradient(90deg, #011722, #010c1c 70%, #020a17); color: #fff; }
.tb { width: 48px; height: 40px; justify-content: center; }
.tb.gap { margin: 0 1px 0 3px; }
.tb.active { background: #34464f; border-bottom: 2px solid #76b9ed; }
.find { display: flex; align-items: center; width: 288px; background: #f2f2f2; border: 1px solid #bbb; color: #222; padding: 0 3px 0 11px; font-size: 14px; font-family: "Open Sans", "Noto Sans", sans-serif; }
.find input { flex: 1; min-width: 0; padding-left: 12px; outline: 0; }
.find input::placeholder { color: #333; }
.gifts { width: 68px; height: 32px; }
.tray { margin-left: auto; display: flex; align-items: center; gap: 8px; padding-right: 20px; border-right: 1px solid #3a4450; margin-right: 4px; }
.tray svg { width: 16px; height: 16px; }
.tray .i12 { width: 12px; height: 12px; }
.tray time { width: 56px; text-align: center; line-height: 18px; }
.tray button { margin-left: 8px; }
```
